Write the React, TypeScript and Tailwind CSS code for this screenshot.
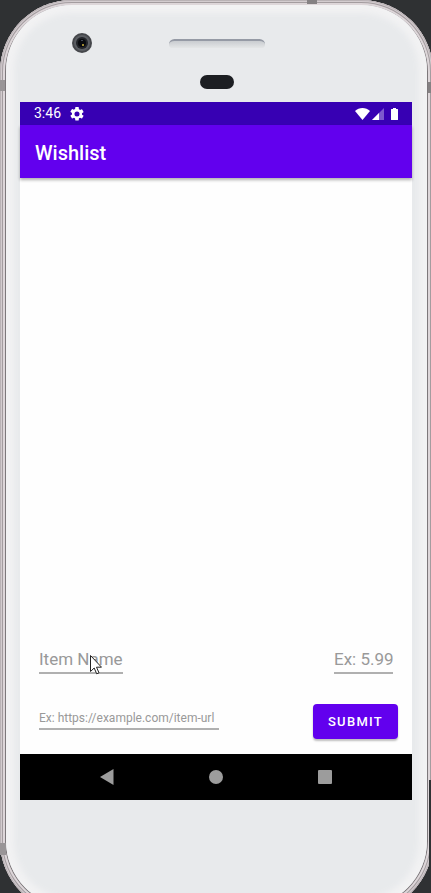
const ring =
  "shadow-[inset_0_0_0_1px_#b9b2b5,inset_0_0_0_2px_#d3cccf,inset_0_0_0_3px_#a39c9f,inset_0_0_0_5px_#ddd6d9]";

function PhoneTop() {
  return (
    <div className="relative flex h-[97px] shrink-0 flex-col items-center pl-[2px]" aria-hidden="true">
      <svg className="absolute left-[51px] top-[27px]" width="22" height="22" viewBox="0 0 22 22">
        <circle cx="11" cy="11" r="10" fill="#45474b" />
        <circle cx="11" cy="11" r="8" fill="#5b5e63" />
        <circle cx="11" cy="11" r="6" fill="#222429" />
        <circle cx="11" cy="11" r="4" fill="#080a0e" />
        <path d="M11 12h2v2h-2z" fill="#a08a32" />
        <path d="M10 8h2v1h-2z" fill="#454a55" />
      </svg>
      <div className="mt-[34px] h-[9px] w-24 rounded-t-md rounded-b border-t-2 border-[#959aa5] bg-linear-to-b from-[#c9ccd0] to-[#e4e6e7]" />
      <div className="mt-[27px] h-[14px] w-[34px] rounded-full bg-[#1c1e22]" />
    </div>
  );
}

function StatusBar() {
  return (
    <div className="flex h-[23px] shrink-0 items-center bg-[#3700b3] px-[14px] text-white">
      <span className="text-[14px] leading-[23px]">3:46</span>
      <svg className="ml-[9px]" width="14" height="14" viewBox="2 2 20 20" fill="currentColor" aria-hidden="true">
        <path d="M19.14 12.94c.04-.3.06-.61.06-.94s-.02-.64-.07-.94l2.03-1.58a.49.49 0 0 0 .12-.61l-1.92-3.32a.49.49 0 0 0-.59-.22l-2.39.96a7 7 0 0 0-1.62-.94l-.36-2.54A.48.48 0 0 0 13.92 2h-3.84a.48.48 0 0 0-.48.41l-.36 2.54c-.59.24-1.13.57-1.62.94l-2.39-.96a.48.48 0 0 0-.59.22L2.72 8.47a.48.48 0 0 0 .12.61l2.03 1.58a6 6 0 0 0 0 1.88l-2.03 1.58a.49.49 0 0 0-.12.61l1.92 3.32c.12.22.37.29.59.22l2.39-.96c.5.38 1.03.7 1.62.94l.36 2.54c.05.24.24.41.48.41h3.84c.24 0 .44-.17.47-.41l.36-2.54a7 7 0 0 0 1.62-.94l2.39.96c.22.08.47 0 .59-.22l1.92-3.32a.48.48 0 0 0-.12-.61zM12 15.6a3.6 3.6 0 1 1 0-7.2 3.6 3.6 0 0 1 0 7.2z" />
      </svg>
      <svg className="ml-auto" width="15" height="12" viewBox="0 0 15 12" fill="currentColor" aria-hidden="true">
        <path d="M0 3C4-1 11-1 15 3L7.500 12z" />
      </svg>
      <svg className="ml-[2px]" width="12" height="12" viewBox="0 0 12 12" fill="currentColor" aria-hidden="true">
        <path d="M12 0v12H0z" opacity=".35" />
        <path d="M7 5v7H0z" />
      </svg>
      <svg className="ml-[7px]" width="7" height="12" viewBox="0 0 7 12" fill="currentColor" aria-hidden="true">
        <path d="M2 0h3v1h1.500a.5.5 0 0 1 .5.5v10a.5.5 0 0 1-.5.5h-6a.5.5 0 0 1-.5-.5v-10a.5.5 0 0 1 .5-.5H2z" />
      </svg>
    </div>
  );
}

const field =
  "border-b-2 border-[#b0b0b0] bg-transparent text-[#444] outline-none placeholder:text-[#999] placeholder:opacity-100";

function WishForm() {
  return (
    <form
      className="relative flex flex-1 flex-col justify-end bg-[#fefefe] px-[19px] pb-[15px]"
      onSubmit={(e) => e.preventDefault()}
    >
      <div className="flex items-end justify-between">
        <input aria-label="Item name" placeholder="Item Name" className={`${field} h-7 w-[84px] text-[17px]`} />
        <input aria-label="Price" placeholder="Ex: 5.99" className={`${field} h-7 w-[59px] text-[17px]`} />
      </div>
      <div className="-mr-[5px] mt-[30px] flex items-start justify-between">
        <input
          aria-label="Item URL"
          placeholder="Ex: https://example.com/item-url"
          className={`${field} mt-1 h-[22px] w-[180px] text-[12px]`}
        />
        <button
          type="submit"
          className="h-[35px] w-[85px] rounded bg-[#6200ee] text-[13px] font-medium tracking-widest text-white shadow-[0_2px_2px_#00000040]"
        >
          SUBMIT
        </button>
      </div>
      <svg className="pointer-events-none absolute bottom-[79px] left-[70px]" width="12" height="20" viewBox="0 0 12 20" aria-hidden="true">
        <path d="M.5.5v16l3.700-3.500 2.500 5.800 2.300-1-2.500-5.600h5z" fill="#fff" stroke="#222" />
      </svg>
    </form>
  );
}

function NavigationBar() {
  return (
    <nav className="flex h-[46px] shrink-0 items-center justify-center gap-[95px] bg-black pr-px text-[#9c9c9c]">
      <button type="button" aria-label="Back">
        <svg width="14" height="16" viewBox="0 0 14 16" fill="currentColor"><path d="M13.500 0v16L0 8z" /></svg>
      </button>
      <button type="button" aria-label="Home">
        <svg width="14" height="14" viewBox="0 0 14 14" fill="currentColor"><circle cx="7" cy="7" r="7" /></svg>
      </button>
      <button type="button" aria-label="Recent apps">
        <svg width="14" height="14" viewBox="0 0 14 14" fill="currentColor"><rect width="14" height="14" rx="1" /></svg>
      </button>
    </nav>
  );
}

export default function App() {
  return (
    <div className="h-screen overflow-hidden bg-[#2f3133] font-[Roboto,sans-serif]">
      <div className={`relative -mr-[2px] flex min-h-[calc(100vh+20px)] flex-col rounded-[72px] bg-[#7d787b] p-[6px] pt-[5px] ${ring}`}>
        <div className="absolute left-0 top-[80px] h-[11px] w-[5px] bg-[#999597]" />
        <div className="absolute right-0 top-[82px] h-[11px] w-[5px] bg-[#858183]" />
        <div className="absolute right-[116px] top-0 h-1 w-[10px] bg-[#858183]" />
        <div className="absolute bottom-[58px] left-0 h-3 w-[6px] bg-[#999597]" />
        <div className="absolute bottom-[40px] right-0 h-[93px] w-1 bg-[#2f3133]" />
        <main className="flex flex-1 flex-col rounded-[66px] bg-[#e8eaec] pr-[15px] pb-[107px] pl-[14px] shadow-[inset_0_0_6px_8px_#f2f2f3]">
          <PhoneTop />
          <section className="flex flex-1 flex-col">
            <StatusBar />
            <header className="z-10 flex h-[53px] shrink-0 items-center bg-[#6200ee] px-[15px] pt-[2px] text-white shadow-[0_2px_3px_#00000050]">
              <h1 className="text-[20px] font-medium">Wishlist</h1>
            </header>
            <WishForm />
            <NavigationBar />
          </section>
        </main>
      </div>
    </div>
  );
}
